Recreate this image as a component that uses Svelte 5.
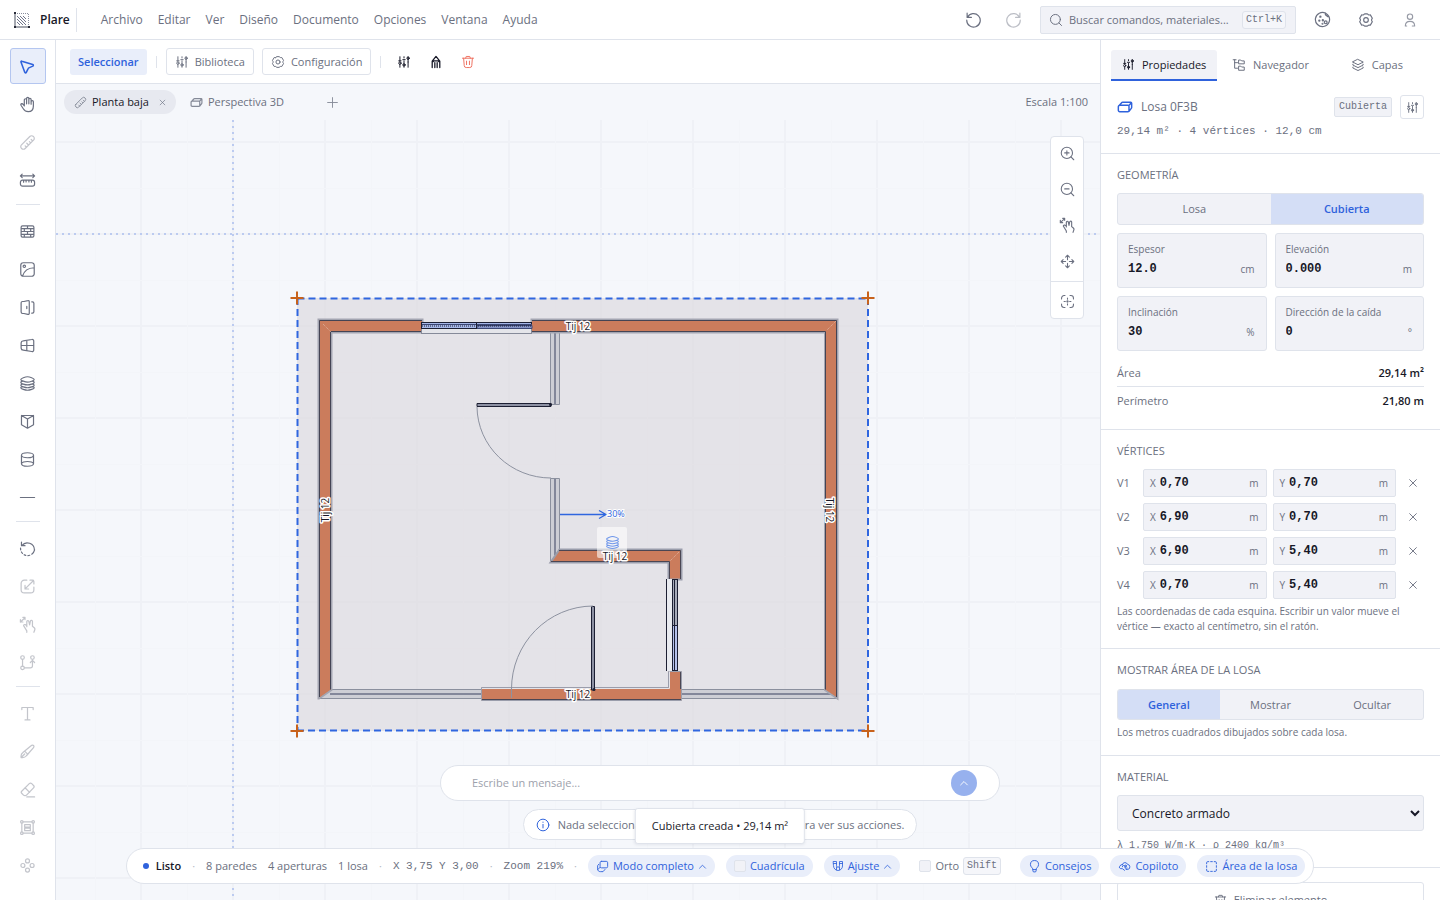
<script>
  const c = (x, y, r) => `<circle cx="${x}" cy="${y}" r="${r}"/>`;
  const p = (d, extra = '') => `<path d="${d}" ${extra}/>`;

  const icons = {
    cursor: p('M4 4.5c-.8-.3-1.500.4-1.200 1.200l5.300 14.500c.4 1 1.700 1.100 2.200.1l2.600-5.400c.2-.5.6-.8 1-1l5.600-2.400c1-.5 1-1.800-.1-2.200z', 'stroke-width="2.200"'),
    hand: p('M7.500 13.500V5.500a1.600 1.600 0 013.200 0V11M10.700 10.500V3.600a1.600 1.600 0 013.200 0V11M13.900 10.500V5a1.600 1.600 0 013.200 0v6.500M17.100 11V8a1.600 1.600 0 013.200 0v6c0 4.800-2.800 8-7.300 8-3.200 0-5.200-1.200-6.700-3.700L2.800 13c-.6-1.100.1-2.200 1.200-2.300.8 0 1.400.3 1.900 1l1.600 2.300'),
    ruler: p('M3.500 15.300L15.300 3.500a3.500 3.500 0 015 0l.2.200a3.500 3.500 0 010 5L8.700 20.500a3.500 3.500 0 01-5 0l-.2-.2a3.500 3.500 0 010-5zM10.500 18.500l-1.800-1.800M13.500 15.500l-2.500-2.500M16.500 12.500l-1.800-1.800M19.200 9.700l-2-2'),
    measure: p('M2 5.500h20M4.500 3L2 5.500 4.500 8M19.500 3L22 5.500 19.500 8M5 11.500h14a3 3 0 013 3V17a3 3 0 01-3 3H5a3 3 0 01-3-3v-2.500a3 3 0 013-3zM6.500 11.500v3M10 11.500v2.500M14 11.500v2.500M17.500 11.500v3'),
    wall: p('M5 4h14a2 2 0 012 2v12a2 2 0 01-2 2H5a2 2 0 01-2-2V6a2 2 0 012-2zM3 8h18M3 12h18M3 16h18M12 4v4M7.500 8v4M16.500 8v4M12 12v4M7.500 16v4M16.500 16v4'),
    image: p('M6 2.500h12a3.500 3.500 0 013.500 3.500v12a3.500 3.500 0 01-3.500 3.500H6A3.500 3.500 0 012.500 18V6A3.500 3.500 0 016 2.500zM5 21.200c2.500-8 8-11.500 16.300-11.700') + c(7.5, 7.5, 1.7),
    door: p('M7 3.500l5.500-1.200c1.200-.3 2 .4 2 1.500v16.400c0 1.100-.8 1.800-2 1.500L7 20.500H5a2 2 0 01-2-2v-13a2 2 0 012-2zM11 10.500v3M18 4h1a2 2 0 012 2v12a2 2 0 01-2 2h-1'),
    window: p('M6 5.500l12-2a2.300 2.300 0 012.800 2.300v12.400a2.300 2.300 0 01-2.800 2.300l-12-2A3 3 0 013 15.700V8.300a3 3 0 013-2.800zM3 12h18M11 4.700v14.600'),
    layers: p('M12 2.500c3 0 9.500 2.200 9.500 3.800S15 10 12 10 2.500 7.800 2.500 6.300 9 2.500 12 2.500zM5 8.700c-1.700.6-2.500 1.200-2.500 1.800 0 1.500 6.500 3.500 9.500 3.500s9.500-2 9.500-3.500c0-.6-.8-1.200-2.500-1.800M5 12.700c-1.700.6-2.500 1.200-2.500 1.800 0 1.500 6.500 3.500 9.500 3.500s9.500-2 9.500-3.500c0-.6-.8-1.200-2.500-1.800M5 16.500c-1.700.6-2.500 1-2.500 1.500 0 1.500 6.500 3.500 9.500 3.500s9.500-2 9.500-3.500c0-.5-.8-.9-2.500-1.500'),
    stack: p('M12 2.500l9 4.500-9 4.500L3 7zM3.500 10.500L3 12l9 4.500 9-4.500-.5-1.500M3.500 15.500L3 17l9 4.500 9-4.500-.5-1.500'),
    panel: p('M3.500 3.500h17v13L12 21.500l-8.500-5zM3.500 3.500L12 8.500l8.500-5M12 8.500v13'),
    cylinder: p('M12 2.500c5 0 8.500 1.500 8.500 3.500S17 9.500 12 9.500 3.500 8 3.500 6 7 2.500 12 2.500zM3.500 6v12c0 2 3.500 3.500 8.500 3.500s8.500-1.500 8.500-3.500V6M3.500 17.500c1-1.500 4-2.700 8.500-2.700s7.500 1.200 8.500 2.700'),
    line: p('M2 12h20'),
    rotate: p('M3.500 3v5h5M4 7.800A10 10 0 0121.800 14M22 14a10 10 0 01-4 6') + p('M2.200 11.500A10 10 0 0017 20.800', 'stroke-dasharray="2.500 3"'),
    scale: p('M11 3H7.500A4.500 4.500 0 003 7.500v9A4.500 4.500 0 007.500 21h9a4.500 4.500 0 004.500-4.500V13M20.500 3.500L9 15M8.500 10.500v5h5M15.500 3H19a2 2 0 012 2v3.500'),
    gesture: p('M11 15V8a1.500 1.500 0 013-.2l1 4.700 1-5a1.500 1.500 0 013 .5v6.500l2.500 2c1 .9 1.200 2 .7 3.200L21 23M11 13.500l-2.300-1.300c-1.500-.7-2.700.8-1.800 2.100L11 21v2M2 8.500l6.500-6M2 5v3.500h3.500M5.500 2h3v3'),
    nodes: c(5, 5, 2.500) + c(5, 19.500, 2.500) + c(19, 5, 2.500) + p('M5 7.500V17M7.500 19.500H16a3 3 0 003-3V9M16 12l3-3 3 3'),
    text: p('M4 6.500V3.500h16v3M12 3.500v17.500M8.500 21h7'),
    brush: p('M3 20.500c-.5-3 .5-5.500 2.500-7L17.500 3.500a2 2 0 013 3L10.500 18c-1.500 2-4 3-7.500 2.500zM8 11.500l4.500 4.500M3 20.500l5-5'),
    eraser: p('M3.800 14.500L14.500 3.800a2.500 2.500 0 013.500 0l2.500 2.500a2.500 2.500 0 010 3.500L11 19.500a3.500 3.500 0 01-5 0l-2.200-2.200a2 2 0 010-2.800zM8.500 9.500l6.500 6.500M11 22.500h11'),
    group: c(4, 4, 1.8) + c(20, 4, 1.8) + c(4, 20, 1.8) + c(20, 20, 1.8) + p('M5.800 4h12.400M5.800 20h12.400M4 5.800v12.400M20 5.800v12.400M8 8h8v3.500H8zM8 13h8v3.500H8z'),
    clover: c(12, 5.5, 2.800) + c(12, 18.500, 2.800) + c(5.500, 12, 2.800) + c(18.500, 12, 2.800),
    sliders: p('M5 3v8M5 16v5M12 3v2M12 10v11M19 3v4M19 12v9M19 7v5') + c(5, 14, 2) + c(12, 17, 2) + c(19, 5.500, 2) + p('M3 10h4M10 8h4'),
    gear: p('M8.300 4.200L10 2.800h4l1.700 1.400c.4.3.8.4 1.200.3l1.600-.2 3 5-1 1.800c-.3.600-.3 1.200 0 1.800l1 1.800-3 5-1.600-.2c-.4 0-.8 0-1.200.3L14 21.200h-4l-1.700-1.400c-.4-.3-.8-.4-1.200-.3l-1.600.2-3-5 1-1.800c.3-.6.3-1.200 0-1.800l-1-1.800 3-5 1.600.2c.4.100.8 0 1.200-.3z') + c(12, 12, 3.500),
    pencil: p('M5.500 21.500V10.500L12 2.500l6.500 8v11M10 21.500V13M14 21.500V13M5.500 12.500L9 10h6l3.500 2.500', 'stroke-width="2.200"'),
    trash: p('M2.500 5.500h19M8 5.500L9 2.500h6l1 3M4.500 5.500L5.500 18a3.500 3.500 0 003.500 3.500h6a3.500 3.500 0 003.500-3.500l1-12.500M9.500 10.500v6M14.500 10.500v6'),
    box: p('M4 9.500h12.500a1.500 1.500 0 011.500 1.500v6.500a1.500 1.500 0 01-1.500 1.500H4a2 2 0 01-2-2v-5.500a2 2 0 012-2zM2.500 10.500L7 5.500a2 2 0 011.500-.5H20.500a1.500 1.500 0 011.500 1.500v6a2 2 0 01-.5 1.500L18 18.500M17.500 10l4-4.500', 'stroke-width="2.200"'),
    undo: p('M3 3v6h6M3.500 9A9.500 9.500 0 112.500 13'),
    redo: p('M21 3v6h-6M20.500 9A9.500 9.500 0 1021.500 13'),
    search: c(11, 11, 8.5) + p('M17 17l4.500 4.500'),
    palette: p('M16.500 3.100A10 10 0 1020.900 7.500M16.500 3.100c-1 1.500-.3 3 1.200 3.200.2 1.200 1.500 2 3.200 1.200M16.500 3.100A10 10 0 0120.900 7.500') + c(16.500, 16, 2) + c(9, 8, .8) + c(7.500, 13.500, .8) + c(12.500, 13, .8) + c(12, 18, .6),
    user: c(12, 7, 4) + p('M5 21c0-4 2.500-7 7-7s7 3 7 7h-3.500M5 21h2'),
    tree: p('M2 3h5M4.500 3v14.500h5M4.500 8h5M12 3.500h3L16.500 5H21v5h-9zM12 14h3l1.500 1.500H21V21h-9z'),
    zoomin: c(11, 11, 9) + p('M17.500 17.500L22 22M11 7.500v7M7.500 11h7'),
    zoomout: c(11, 11, 9) + p('M17.500 17.500L22 22M7.500 11h7'),
    move: p('M12 2v7M12 15v7M2 12h7M15 12h7M9 5l3-3 3 3M9 19l3 3 3-3M5 9l-3 3 3 3M19 9l3 3-3 3'),
    fit: p('M8 2.500H6.500a4 4 0 00-4 4V8M16 2.500h1.500a4 4 0 014 4V8M8 21.500H6.500a4 4 0 01-4-4V16M16 21.500h1.500a4 4 0 004-4V16M12 6.500v2M12 15.500v2M6.500 12h2M15.500 12h2') + c(12, 12, 1),
    plus: p('M12 3v18M3 12h18'),
    close: p('M4 4l16 16M20 4L4 20', 'stroke-width="2.200"'),
    up: p('M4 16.500l8-8 8 8', 'stroke-width="2.200"'),
    info: c(12, 12, 10) + p('M12 11v6M12 7v.5'),
    mode: p('M10 2.500h9a2.500 2.500 0 012.500 2.500v7a2.500 2.500 0 01-2.500 2.500h-9A2.500 2.500 0 017.500 12V5A2.500 2.500 0 0110 2.500zM5 8L3 10.500v6c0 3 2 5 5 5h5l3.500-4M7.500 13.500l-4 4'),
    magnet: p('M3 3h6v8.500a3 3 0 006 0V3h6v9a9 9 0 01-18 0zM3 7h6M15 7h6M9 19.500v-5M15 19.500v-5'),
    bulb: p('M9 17c0-2.500-4.500-4-4.500-8.500a7.500 7.500 0 0115 0c0 4.500-4.500 6-4.500 8.500zM9 17v3a2 2 0 002 2h2a2 2 0 002-2v-3'),
    copilot: p('M8 8.500A5 5 0 0117.500 8a4.800 4.800 0 01.5 9.500h-3M8 8.500a4 4 0 00-4.500 3L2 13l2.500 3H8l4 3M8 12.500a2.500 2.500 0 015 0v2.500h4') + c(14, 11, 1.5),
    area: p('M3 7V5a2 2 0 012-2h2M17 3h2a2 2 0 012 2v2M21 17v2a2 2 0 01-2 2h-2M7 21H5a2 2 0 01-2-2v-2M10.500 3h3M10.500 21h3M3 10.500v3M21 10.500v3')
  };

  const menus = ['Archivo', 'Editar', 'Ver', 'Diseño', 'Documento', 'Opciones', 'Ventana', 'Ayuda'];
  const tools = [
    [['cursor', 'Seleccionar', 'active'], ['hand', 'Desplazar', ''], ['ruler', 'Regla', 'off'], ['measure', 'Medir', '']],
    [['wall', 'Pared', ''], ['image', 'Imagen', ''], ['door', 'Puerta', ''], ['window', 'Ventana', ''], ['layers', 'Losa', ''], ['panel', 'Panel', ''], ['cylinder', 'Columna', ''], ['line', 'Línea', '']],
    [['rotate', 'Girar', ''], ['scale', 'Escalar', 'off'], ['gesture', 'Arrastrar', 'off'], ['nodes', 'Nodos', 'off']],
    [['text', 'Texto', 'off'], ['brush', 'Pincel', 'off'], ['eraser', 'Borrador', 'off'], ['group', 'Agrupar', 'off'], ['clover', 'Patrón', 'off']]
  ];
  const fields = [
    ['Espesor', '12.0', 'cm'],
    ['Elevación', '0.000', 'm'],
    ['Inclinación', '30', '%'],
    ['Dirección de la caída', '0', '°']
  ];
  const vertices = [['0,70', '0,70'], ['6,90', '0,70'], ['6,90', '5,40'], ['0,70', '5,40']];
  const gridX = [-1, 0, 1, 2, 3, 4, 5, 6, 7, 8, 9, 10, 11, 12, 13, 14].map((i) => 141 + i * 92);
  const gridY = [0, 1, 2, 3, 4, 5, 6, 7, 8, 9].map((i) => 142 + i * 92);
  const wallTags = [[578, 326, 0], [615, 556, 0], [578, 694, 0], [325, 510, -90], [830, 510, 90]];
  const corners = [[297, 298], [868, 298], [297, 731], [868, 731]];
  let shape = $state('Cubierta');
  let areaMode = $state('General');
</script>

{#snippet icon(name, size = 16)}
  <svg class="icon" width={size} height={size} viewBox="0 0 24 24" aria-hidden="true">{@html icons[name]}</svg>
{/snippet}

<div class="app">
  <header class="topbar">
    <div class="brand">
      <svg width="18" height="18" viewBox="0 0 18 18" aria-hidden="true">
        <path d="M2 1v15h15" fill="none" stroke="#4b5060" />
        <path d="M2 2.500h13.500V16" fill="none" stroke="#8b90a0" stroke-dasharray="1 1" />
        <path d="M4 5l9 9M7 5l6 6M4 8l6 6M10 5l3 3M4 11l3 3" stroke="#70758a" />
        <path d="M1 1h2v2H1zM1 15h2v2H1zM15 15h2v2h-2z" fill="#2a2d3a" />
      </svg>
      <strong>Plare</strong>
    </div>
    <nav class="menus" aria-label="Menú principal">
      {#each menus as m}<button>{m}</button>{/each}
    </nav>
    <div class="topright">
      <button class="round" aria-label="Deshacer">{@render icon('undo', 17)}</button>
      <button class="round faded" aria-label="Rehacer">{@render icon('redo', 17)}</button>
      <label class="search">
        {@render icon('search', 14)}
        <input type="text" placeholder="Buscar comandos, materiales..." aria-label="Buscar" />
        <kbd>Ctrl+K</kbd>
      </label>
      <button class="round" aria-label="Tema">{@render icon('palette', 17)}</button>
      <button class="round" aria-label="Ajustes">{@render icon('gear', 16)}</button>
      <button class="round user" aria-label="Cuenta">{@render icon('user', 16)}</button>
    </div>
  </header>

  <div class="body">
    <aside class="tools">
      {#each tools as set}
        <div class="toolset">
          {#each set as [name, label, state]}
            <button class="tool {state}" aria-label={label}>{@render icon(name, 17)}</button>
          {/each}
        </div>
      {/each}
    </aside>

    <main class="work">
      <div class="actions">
        <button class="act primary">Seleccionar</button>
        <i class="bar"></i>
        <div class="pair">
          <button class="act outlined">{@render icon('sliders', 14)}Biblioteca</button>
          <button class="act outlined">{@render icon('gear', 14)}Configuración</button>
        </div>
        <i class="bar"></i>
        <div class="quick">
          <button aria-label="Propiedades">{@render icon('sliders', 14)}</button>
          <button aria-label="Editar">{@render icon('pencil', 14)}</button>
          <button class="danger" aria-label="Eliminar">{@render icon('trash', 14)}</button>
        </div>
      </div>

      <div class="views">
        <button class="view current"><span class="viewicon">{@render icon('ruler', 13)}</span>Planta baja<span class="x">{@render icon('close', 7)}</span></button>
        <button class="view"><span class="viewicon">{@render icon('box', 13)}</span>Perspectiva 3D</button>
        <button class="add" aria-label="Nueva vista">{@render icon('plus', 13)}</button>
        <span class="scale">Escala 1:100</span>
      </div>

      <div class="canvas">
        <svg class="plan" width="100%" height="100%" aria-label="Planta baja">
          <g transform="translate(-56 -120)">
            <g stroke="#eff1f6" stroke-width="2">
              {#each gridX as x}<path d="M{x} 120V900" />{/each}
              {#each gridY as y}<path d="M56 {y}H1400" />{/each}
            </g>
            <g stroke="#f3f5f9">
              {#each gridX as x}<path d="M{x + 46.500} 120V900" />{/each}
              {#each gridY as y}<path d="M56 {y + 46.500}H1400" />{/each}
            </g>
            <path d="M233 120V900M56 234H1400" stroke="#bccbf0" stroke-width="2" stroke-dasharray="2 4" />

            <rect x="297" y="298" width="571" height="433" fill="#dad6dc" fill-opacity=".62" />
            <g fill="none" stroke="#2f66df" stroke-width="2" stroke-dasharray="7 4">
              <path d="M297.500 298.500H868" /><path d="M297.500 298V731" /><path d="M868 298V731" /><path d="M297 730.500H868" />
            </g>

            <g fill="#cdced5" stroke="#8b909e">
              <path d="M550.500 332.500h9v72h-9zM550.500 478.500h9v71l-8 12h-1z" />
              <path d="M331.500 689.500h150v9h-163zM681.500 689.500h144l12 9h-156z" />
            </g>
            <path d="M555 333V404M555 479V555M330 694H481M682 694H831" stroke="#83879a" stroke-width="2" />

            <path d="M318.500 319.500H422.500V332.500H331.500V690L319 698.500H318.500zM531.500 319.500H837.500V698.500L825 690V332.500H531.500z" fill="#cb7c5c" stroke="#a3a5b1" stroke-width="2" />
            <path d="M319.500 320.500H422V331.500H330.500V689.500L320 697H319.500zM532 320.500H836.500V697L825.500 689.500V331.500H532z" fill="#cb7c5c" />
            <path d="M319.500 697V320.500H422M422 331.500H330.500V689.500M532 320.500H836.500V697M532 331.500H825.500V689.500" fill="none" stroke="#444454" />

            <path d="M559.500 549.500H681.500V579.500H668.500V562.500H550.500z" fill="#cb7c5c" stroke="#9a9dab" stroke-width="2" />
            <path d="M559 550.500H680.500V579M551 561.500H669.500V579" fill="none" stroke="#4a4653" />
            <path d="M481.500 687.500H668.500V671.500H681.500V700.500H481.500z" fill="#cb7c5c" stroke="#9a9dab" />
            <path d="M482 688.500H669.500V671.500" fill="none" stroke="#e4e3e8" />
            <path d="M482 699.500H681M680.500 672V689" stroke="#4a4653" fill="none" />
            <path d="M323 324l8 8M836 321l-9 9M679 552l-9 9" stroke="#e0b4a1" stroke-dasharray="1 1" />

            <rect x="421.500" y="328.500" width="110" height="5" fill="#e4e5ea" stroke="#858a99" />
            <rect x="421.500" y="322.500" width="110" height="6" fill="#a6b7e7" stroke="#1c1f33" />
            <path d="M477 325.500h55v3h-55zM422 324.500h110" fill="#8795c7" stroke="#3c4774" />
            <path d="M422 326h110" stroke="#1c1f33" stroke-dasharray="1 1" />
            <path d="M476.500 322v7" stroke="#1c1f33" />

            <rect x="667" y="579" width="5" height="92" fill="#e9ebf0" />
            <rect x="672" y="579" width="6" height="92" fill="#a7acba" />
            <rect x="673" y="626" width="4" height="45" fill="#b6c2ec" />
            <path d="M666.500 579V671M672.500 579V671M674.500 579V671M677.500 579V671M672 625.500h6M672 579.500h6M672 670.500h6" stroke="#1c1f33" />

            <path d="M477 403.500H551V406.500H477z" fill="#8d91a3" stroke="#1c1f33" />
            <path d="M477 407A74 72 0 00551 478" fill="none" stroke="#8d92a0" />
            <path d="M591.500 606.500H594.500V690H591.500z" fill="#8d91a3" stroke="#1c1f33" />
            <path d="M593 606A82 83 0 00511.500 689V698" fill="none" stroke="#8d92a0" />
            <circle cx="550.500" cy="404.500" r="1.500" fill="#1c1f33" />
            <circle cx="594" cy="689.500" r="1.500" fill="#1c1f33" />

            <path d="M560 514.500H606M599 510.500l7 4-7 4" fill="none" stroke="#2f66df" stroke-width="1.300" />
            <text class="slope" x="607" y="517">30%</text>
            <rect x="597" y="527" width="30" height="31" rx="2" fill="#fff" fill-opacity=".58" />
            <svg class="icon layer" x="605" y="535" width="15" height="15" viewBox="0 0 24 24">{@html icons.layers}</svg>
            {#each wallTags as [x, y, a]}
              <text class="tag" transform="translate({x} {y}) rotate({a})" y="4">Tij 12</text>
            {/each}
            {#each corners as [x, y]}
              <path d="M{x - 6.500} {y}h13M{x} {y - 6.500}v13" stroke="#c8621b" stroke-width="2" />
            {/each}
          </g>
        </svg>
        <div class="zoombar">
          <button aria-label="Acercar">{@render icon('zoomin', 15)}</button>
          <button aria-label="Alejar">{@render icon('zoomout', 15)}</button>
          <button aria-label="Mano">{@render icon('gesture', 16)}</button>
          <button aria-label="Mover">{@render icon('move', 15)}</button>
          <button class="fit" aria-label="Encajar">{@render icon('fit', 15)}</button>
        </div>
      </div>
    </main>

    <aside class="props">
      <div class="tabs">
        <button class="tab on">{@render icon('sliders', 13)}Propiedades</button>
        <button class="tab">{@render icon('tree', 14)}Navegador</button>
        <button class="tab">{@render icon('stack', 14)}Capas</button>
      </div>

      <section class="object">
        <div class="objrow">
          <span class="boxicon">{@render icon('box', 16)}</span>
          <h2>Losa 0F3B</h2>
          <span class="kind">Cubierta</span>
          <button class="mini" aria-label="Opciones">{@render icon('sliders', 13)}</button>
        </div>
        <p class="mono">29,14 m² · 4 vértices · 12,0 cm</p>
      </section>

      <section class="geometry">
        <h3>GEOMETRÍA</h3>
        <div class="segment">
          {#each ['Losa', 'Cubierta'] as s}
            <button class:sel={shape === s} onclick={() => (shape = s)}>{s}</button>
          {/each}
        </div>
        <div class="fields">
          {#each fields as [label, value, unit]}
            <label class="field">
              <span>{label}</span>
              <div><input type="text" {value} /><em>{unit}</em></div>
            </label>
          {/each}
        </div>
        <dl>
          <div><dt>Área</dt><dd>29,14 m²</dd></div>
          <div><dt>Perímetro</dt><dd>21,80 m</dd></div>
        </dl>
      </section>

      <section class="vertices">
        <h3>VÉRTICES</h3>
        <div class="vlist">
          {#each vertices as [x, y], i}
            <div class="vrow">
              <span class="vn">V{i + 1}</span>
              <label class="coord"><span>X</span><input type="text" value={x} /><em>m</em></label>
              <label class="coord"><span>Y</span><input type="text" value={y} /><em>m</em></label>
              <button aria-label="Quitar vértice {i + 1}">{@render icon('close', 10)}</button>
            </div>
          {/each}
        </div>
        <p class="hint">Las coordenadas de cada esquina. Escribir un valor mueve el vértice — exacto al centímetro, sin el ratón.</p>
      </section>

      <section class="show">
        <h3>MOSTRAR ÁREA DE LA LOSA</h3>
        <div class="segment">
          {#each ['General', 'Mostrar', 'Ocultar'] as s}
            <button class:sel={areaMode === s} onclick={() => (areaMode = s)}>{s}</button>
          {/each}
        </div>
        <p class="hint">Los metros cuadrados dibujados sobre cada losa.</p>
      </section>

      <section class="material">
        <h3>MATERIAL</h3>
        <select aria-label="Material"><option>Concreto armado</option></select>
        <p class="mono small">λ 1.750 W/m·K · ρ 2400 kg/m³</p>
      </section>

      <section class="remove">
        <button>{@render icon('trash', 13)}Eliminar elemento</button>
      </section>
    </aside>
  </div>

  <div class="dock">
    <form class="message" onsubmit={(e) => e.preventDefault()}>
      <input type="text" placeholder="Escribe un mensaje..." aria-label="Mensaje" />
      <button aria-label="Enviar">{@render icon('up', 10)}</button>
    </form>
    <div class="notice">
      <span class="infoicon">{@render icon('info', 14)}</span>
      <span>Nada seleccionado. Haga clic en un elemento para ver sus acciones.</span>
      <div class="toast" role="status">Cubierta creada • 29,14 m²</div>
    </div>
    <footer class="status">
      <span class="ready"><i></i>Listo</span>
      <span class="sep">·</span>
      <span class="counts"><span>8 paredes</span><span>4 aperturas</span><span>1 losa</span></span>
      <span class="sep">·</span>
      <span class="mono">X 3,75 Y 3,00</span>
      <span class="sep">·</span>
      <span class="mono">Zoom 219%</span>
      <span class="sep">·</span>
      <button class="chip">{@render icon('mode', 13)}Modo completo{@render icon('up', 9)}</button>
      <label class="chip"><input type="checkbox" />Cuadrícula</label>
      <button class="chip">{@render icon('magnet', 12)}Ajuste{@render icon('up', 9)}</button>
      <label class="chip plain"><input type="checkbox" />Orto<kbd>Shift</kbd></label>
      <button class="chip">{@render icon('bulb', 13)}Consejos</button>
      <button class="chip">{@render icon('copilot', 13)}Copiloto</button>
      <button class="chip">{@render icon('area', 13)}Área de la losa</button>
    </footer>
  </div>
</div>

<style>
  :global(body) { background: #fff; }
  .app, .app * { box-sizing: border-box; }
  .app {
    --line: #dfe3eb;
    --soft: #f1f2f7;
    --blue: #2f62dc;
    --ink: #171827;
    --gray: #6b7080;
    height: 100vh;
    display: flex;
    flex-direction: column;
    overflow: hidden;
    position: relative;
    font: 11px/16px "Open Sans", "Noto Sans", sans-serif;
    color: var(--gray);
  }
  button, input, select { font: inherit; color: inherit; }
  button { border: 0; background: none; padding: 0; display: inline-flex; align-items: center; justify-content: center; cursor: pointer; }
  input { border: 0; background: none; padding: 0; min-width: 0; outline: none; }
  h2, h3, p, dl, dd { margin: 0; font-weight: 400; }
  em, i { font-style: normal; }
  .icon { fill: none; stroke: currentColor; stroke-width: 1.7; stroke-linecap: round; stroke-linejoin: round; flex: none; }
  .mono, kbd, .kind { font-family: "Liberation Mono", monospace; }
  kbd { font-size: 10px; line-height: 14px; border: 1px solid var(--line); border-radius: 3px; padding: 1px 3px; background: #f5f6fa; }

  .topbar { height: 40px; flex: none; display: flex; align-items: center; border-bottom: 1px solid var(--line); background: #fff; }
  .brand { display: flex; align-items: center; gap: 9px; height: 24px; padding: 0 6px 0 13px; border-right: 1px solid var(--line); }
  .brand strong { color: var(--ink); font-size: 12px; font-weight: 600; }
  .menus { display: flex; gap: 15px; padding-left: 24px; font-size: 12px; }
  .topright { margin-left: auto; display: flex; align-items: center; padding-right: 14px; }
  .round { width: 32px; height: 32px; margin: 0 6px; }
  .round.faded { opacity: .45; margin: 0 11px 0 2px; }
  .round.user { opacity: .7; margin-right: 0; }
  .search { width: 256px; height: 28px; display: flex; align-items: center; gap: 6px; padding: 0 9px 0 8px; margin-right: 4px; border: 1px solid var(--line); border-radius: 2px; background: var(--soft); }
  .search input { flex: 1; }
  .search input::placeholder { color: var(--gray); opacity: 1; }

  .body { flex: 1; min-height: 0; display: flex; }
  .tools { width: 56px; flex: none; border-right: 1px solid var(--line); padding-top: 8px; background: #fff; }
  .toolset { display: flex; flex-direction: column; align-items: center; gap: 2px; }
  .toolset + .toolset { margin-top: 6px; }
  .toolset + .toolset::before { content: ""; width: 24px; height: 1px; margin-bottom: 6px; background: var(--line); }
  .tool { width: 36px; height: 36px; border: 1px solid transparent; border-radius: 3px; }
  .tool.active { color: var(--blue); background: #e9eefa; border-color: #b4c6f0; }
  .tool.off { opacity: .4; }

  .work { flex: 1; min-width: 0; display: flex; flex-direction: column; background: #f5f7fb; }
  .actions { height: 44px; flex: none; display: flex; align-items: center; padding-left: 14px; background: #fff; border-bottom: 1px solid var(--line); }
  .act { height: 26px; padding: 0 8px; border-radius: 3px; gap: 6px; }
  .primary { color: var(--blue); background: #e9eefa; font-weight: 600; }
  .outlined { border: 1px solid var(--line); height: 27px; }
  .pair { display: flex; gap: 8px; }
  .bar { width: 1px; height: 12px; margin: 0 9px; background: var(--line); }
  .quick { display: flex; gap: 4px; color: var(--ink); }
  .quick button { width: 28px; height: 28px; }
  .quick .danger { color: #ef7262; }
  .views { height: 36px; flex: none; display: flex; align-items: center; padding: 0 12px 0 8px; }
  .view { height: 24px; padding: 0 10px; border-radius: 12px; gap: 5px; }
  .view.current { background: #e7e9f0; color: var(--ink); font-weight: 500; }
  .viewicon { display: flex; color: #858a98; }
  .view .x { display: flex; color: var(--gray); margin-left: 5px; }
  .view:not(.current) { margin-left: 4px; }
  .add { width: 24px; height: 24px; margin-left: 26px; color: #858a98; }
  .scale { margin-left: auto; }
  .canvas { flex: 1; min-height: 0; position: relative; overflow: hidden; }
  .plan { position: absolute; inset: 0; }
  .tag { font-size: 10px; text-anchor: middle; fill: #171827; stroke: #fff; stroke-width: 3px; stroke-linejoin: round; paint-order: stroke; }
  .slope { font-size: 9px; fill: var(--blue); stroke: #fff; stroke-width: 2px; paint-order: stroke; }
  .layer { color: #6f96ea; }
  .zoombar { position: absolute; top: 16px; right: 16px; display: flex; flex-direction: column; gap: 4px; background: #fff; border: 1px solid var(--line); border-radius: 4px; }
  .zoombar button { width: 32px; height: 32px; }
  .zoombar .fit { border-top: 1px solid var(--line); height: 37px; padding-top: 3px; }

  .props { width: 340px; flex: none; border-left: 1px solid var(--line); background: #fff; overflow: hidden; }
  .tabs { display: grid; grid-template-columns: repeat(3, 1fr); padding: 10px 10px 0; }
  .tab { height: 31px; gap: 7px; border-bottom: 2px solid transparent; font-weight: 500; }
  .tab.on { background: var(--soft); color: var(--ink); border-color: var(--blue); border-radius: 3px 3px 0 0; }
  section { padding: 13px 16px 0; border-bottom: 1px solid var(--line); }
  h3 { font-size: 11px; line-height: 16px; font-weight: 500; }
  .object { padding: 14px 16px; }
  .objrow { display: flex; align-items: center; gap: 8px; height: 24px; }
  .objrow h2 { flex: 1; font-size: 12px; line-height: 16px; }
  .boxicon { color: var(--blue); display: flex; }
  .kind { font-size: 10px; line-height: 14px; padding: 2px 4px; border: 1px solid var(--line); border-radius: 2px; background: var(--soft); }
  .mini { width: 24px; height: 24px; border: 1px solid var(--line); border-radius: 3px; }
  .mono { font-size: 11px; line-height: 16px; }
  .object .mono { margin-top: 4px; }
  .segment { display: flex; height: 32px; margin-top: 10px; border: 1px solid var(--line); border-radius: 3px; overflow: hidden; background: var(--soft); }
  .segment button { flex: 1; }
  .segment .sel { background: #d4def6; color: var(--blue); font-weight: 600; }
  .fields { display: grid; grid-template-columns: 1fr 1fr; gap: 8px; margin-top: 8px; }
  .field { height: 55px; padding: 7px 11px 0 10px; border: 1px solid var(--line); border-radius: 3px; background: var(--soft); font-size: 10px; }
  .field > span { display: block; line-height: 16px; }
  .field div { display: flex; align-items: center; margin-top: 4px; }
  .field input, .coord input { flex: 1; width: 0; font: bold 12px/16px "Liberation Mono", monospace; color: var(--ink); height: 16px; }
  dl { margin-top: 8px; }
  dl div { display: flex; justify-content: space-between; padding: 6px 0 5px; }
  dl div + div { border-top: 1px solid var(--line); }
  dd { color: var(--ink); font-weight: 600; }
  .geometry { padding-bottom: 15px; }
  .vlist { display: flex; flex-direction: column; gap: 6px; margin-top: 10px; }
  .vertices { padding-bottom: 14px; }
  .vrow { display: grid; grid-template-columns: 20px 1fr 1fr 22px; gap: 6px; align-items: center; }
  .vrow button { width: 22px; height: 22px; }
  .coord { height: 28px; display: flex; align-items: center; gap: 4px; padding: 0 7px 0 6px; border: 1px solid var(--line); border-radius: 2px; background: var(--soft); font-size: 10px; }
  .hint { font-size: 10px; line-height: 15px; margin-top: 5px; }
  .show { padding-bottom: 15px; }
  .show .segment { height: 31px; margin-top: 11px; }
  .material { padding-bottom: 13px; }
  .material select { display: block; width: 100%; height: 36px; margin-top: 10px; padding: 0 10px; border: 1px solid var(--line); border-radius: 3px; background: var(--soft); color: var(--ink); font-size: 12px; }
  .small { font-size: 10px; margin-top: 7px; }
  .remove { border: 0; padding-top: 14px; }
  .remove button { width: 100%; height: 36px; border: 1px solid var(--line); border-radius: 3px; gap: 7px; }

  .dock { position: absolute; left: 0; right: 0; bottom: 16px; display: flex; flex-direction: column; align-items: center; gap: 8px; pointer-events: none; }
  .dock > * { pointer-events: auto; background: #fff; border: 1px solid var(--line); }
  .message { width: 560px; height: 36px; border-radius: 18px; display: flex; align-items: center; padding: 0 22px 0 31px; }
  .message input { flex: 1; }
  .message input::placeholder { color: #9da1ac; opacity: 1; }
  .message button { width: 26px; height: 26px; border-radius: 50%; background: #97b1ee; color: #fff; }
  .notice { position: relative; height: 31px; border-radius: 16px; display: flex; align-items: center; gap: 8px; padding: 0 12px; }
  .infoicon { color: var(--blue); display: flex; }
  .toast { position: absolute; left: 50%; top: -2px; transform: translateX(-50%); height: 36px; padding: 0 16px; display: flex; align-items: center; white-space: nowrap; background: #fff; color: var(--ink); border-radius: 3px; border: 1px solid var(--line); box-shadow: 0 1px 3px rgba(30, 40, 80, .08); }
  .status { height: 36px; border-radius: 18px; display: flex; align-items: center; gap: 11px; padding: 0 8px 0 16px; white-space: nowrap; }
  .ready { display: flex; align-items: center; gap: 7px; color: var(--ink); font-weight: 600; }
  .ready i { width: 6px; height: 6px; border-radius: 50%; background: var(--blue); }
  .counts { display: flex; gap: 11px; }
  .sep { color: #b6bac6; }
  .chip { height: 22px; padding: 0 8px; border-radius: 11px; display: flex; align-items: center; gap: 4px; background: #e9eefa; color: var(--blue); font-weight: 500; }
  .chip input { appearance: none; width: 12px; height: 12px; margin: 0; border: 1px solid var(--line); border-radius: 2px; background: var(--soft); }
  .chip.plain { background: none; color: var(--gray); font-weight: 400; }
</style>
